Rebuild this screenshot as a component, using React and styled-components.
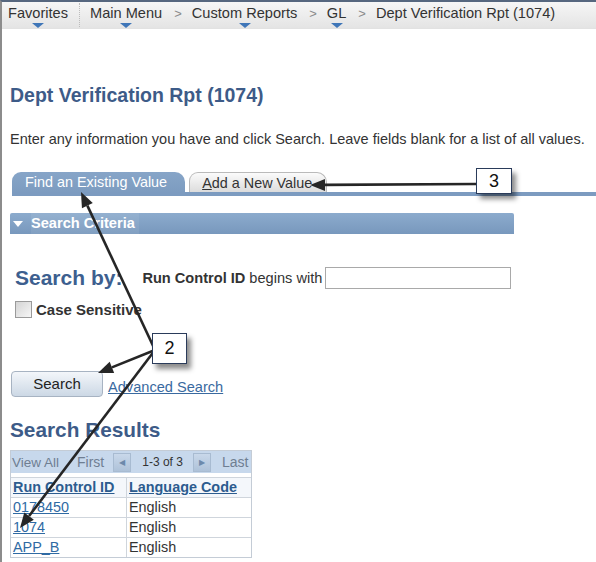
import React from 'react';
import styled, { createGlobalStyle } from 'styled-components';

const GlobalStyle = createGlobalStyle`
  html, body { margin: 0; padding: 0; background: #fff; }
  body { font-family: "Liberation Sans", Arial, sans-serif; color: #333; }
`;

const Page = styled.div`
  position: relative;
  width: 594px;
  height: 560px;
  border-left: 2px solid #8c8c8c;
  border-top: 2px solid #56677f;
  overflow: hidden;
`;

const NavBar = styled.div`
  display: flex;
  align-items: center;
  height: 26px;
  padding-left: 6px;
  background: linear-gradient(#f6f6f6, #e4e4e4);
  border-bottom: 1px solid #e2e2e2;
  font-size: 14.6px;
  color: #333;
`;

const NavItem = styled.span`
  position: relative;
  display: block;
  line-height: 17px;
  margin-top: -3px;

  ${p => p.menu && `
    &::after {
      content: '';
      position: absolute;
      left: 50%;
      top: 100%;
      margin: 1px 0 0 -6px;
      border-left: 6px solid transparent;
      border-right: 6px solid transparent;
      border-top: 5px solid #3f76b8;
    }
  `}
`;

const NavDivider = styled.span`
  width: 0;
  height: 24px;
  border-left: 1px dotted #bcbcbc;
  margin: 0 10px 0 11px;
`;

const Crumb = styled.span`
  color: #8a8a8a;
  font-size: 13px;
  margin: -3px 10px 0 12px;
`;

const Content = styled.div`
  padding-left: 8px;
`;

const Title = styled.h1`
  margin: 55px 0 0;
  font-size: 19.5px;
  line-height: 22px;
  font-weight: bold;
  color: #3d5b88;
`;

const Intro = styled.p`
  margin: 25px 0 0;
  font-size: 14.5px;
  line-height: 17px;
  color: #333;
`;

const TabStrip = styled.div`
  display: flex;
  align-items: flex-end;
  gap: 4px;
  margin: 24px 0 0 2px;
  border-bottom: 4px solid #7c9bc0;
`;

const Tab = styled.div`
  height: ${p => (p.active ? 20 : 19)}px;
  line-height: 20px;
  padding: ${p => (p.active ? '0 18px 0 13px' : '0 14px 0 12px')};
  font-size: 14.4px;
  border-radius: 9px 10px 0 0;
  color: ${p => (p.active ? '#fff' : '#333')};
  background: ${p => (p.active
    ? 'linear-gradient(#87a5c8, #7d9cc0)'
    : 'linear-gradient(#fbfbfb, #dcdcdc)')};
  border: ${p => (p.active ? 'none' : '1px solid #bababa')};
  border-bottom: none;
`;

const SectionBar = styled.div`
  display: flex;
  align-items: center;
  width: 504px;
  height: 21px;
  margin-top: 17px;
  background: linear-gradient(#8cabcd, #7898bd);
  border-radius: 2px 2px 0 0;
  color: #fff;
  font-size: 14.6px;
  font-weight: bold;

  &::before {
    content: '';
    margin: 0 8px 0 3px;
    border-left: 5px solid transparent;
    border-right: 5px solid transparent;
    border-top: 6px solid #fff;
  }
`;

const SectionLabel = styled.span`
  line-height: 21px;
  padding-right: 4px;
  background: rgba(255, 255, 255, 0.07);
`;

const SearchRow = styled.div`
  display: flex;
  align-items: center;
  height: 24px;
  margin-top: 32px;
  padding-left: 5px;
  font-size: 14.6px;
`;

const SearchBy = styled.span`
  font-size: 21px;
  font-weight: bold;
  color: #3d5f8f;
  margin-right: 20px;
`;

const Label = styled.span`
  font-weight: bold;
  color: #333;
  margin-right: 4px;
`;

const Input = styled.div`
  width: 184px;
  height: 20px;
  border: 1px solid #a9a9a9;
  margin-left: 3px;
  background: #fff;
`;

const CheckRow = styled.div`
  display: flex;
  align-items: center;
  height: 17px;
  margin-top: 11px;
  padding-left: 5px;
  font-size: 15px;
  font-weight: bold;
  color: #333;
`;

const Checkbox = styled.span`
  width: 15px;
  height: 15px;
  border: 1px solid #9a9a9a;
  background: linear-gradient(135deg, #d4d4d4, #f6f6f6);
  margin-right: 4px;
`;

const ActionRow = styled.div`
  display: flex;
  align-items: center;
  margin-top: 53px;
  padding-left: 1px;
`;

const Button = styled.div`
  width: 90px;
  height: 24px;
  line-height: 24px;
  text-align: center;
  border: 1px solid #a7b3c2;
  border-radius: 4px;
  background: linear-gradient(#f3f6fa, #ccd8e5);
  font-size: 15px;
  color: #222;
`;

const Link = styled.a`
  color: #3a6aa0;
  text-decoration: underline;
  font-size: 14.6px;
  margin: 6px 0 0 5px;
  cursor: pointer;
`;

const ResultsTitle = styled.h2`
  margin: 21px 0 0;
  font-size: 20.8px;
  line-height: 24px;
  font-weight: bold;
  color: #3d5b88;
`;

const Grid = styled.div`
  width: 240px;
  margin-top: 8px;
  overflow: hidden;
  border: 1px solid #c4ccd6;
  font-size: 14.4px;
`;

const Pager = styled.div`
  display: flex;
  align-items: center;
  height: 22px;
  white-space: nowrap;
  background: #c7d8ec;
  padding-left: 1px;
  border-bottom: 4px solid #fff;
`;

const PagerText = styled.span`
  margin-right: ${p => p.gap || 0}px;
  font-size: ${p => p.size || 14}px;
  color: ${p => (p.dark ? '#333' : '#6f7e92')};
`;

const PageBtn = styled.span`
  display: flex;
  align-items: center;
  justify-content: center;
  width: 16px;
  height: 17px;
  margin-right: ${p => p.gap || 0}px;
  background: linear-gradient(#c9d8ea, #aec2d9);
  border: 1px solid #a8bbd1;
  color: #6d89ab;
  font-size: 8px;
`;

const Row = styled.div`
  display: grid;
  grid-template-columns: 115px 1fr;
  height: 19px;
  line-height: 19px;
  border-top: 1px solid #cfd5dc;
  background: ${p => (p.head ? '#f4f7fb' : '#fff')};

  & > span {
    padding-left: 2px;
    white-space: nowrap;
  }
  & > span + span { border-left: 1px solid #cfd5dc; }
`;

const HeadLink = styled.span`
  font-weight: bold;
  color: #2c5c8f;
  text-decoration: underline;
`;

const CellLink = styled.span`
  color: #2f6aa3;
  text-decoration: underline;
`;

const Callout = styled.div`
  position: absolute;
  left: ${p => p.x}px;
  top: ${p => p.y}px;
  width: ${p => p.w}px;
  height: ${p => p.h}px;
  line-height: ${p => p.h}px;
  text-align: center;
  background: #fff;
  border: 1px solid #2a3b5a;
  box-shadow: 4px 5px 5px rgba(0, 0, 0, 0.45);
  font-size: 18px;
  color: #111;
`;

const Overlay = styled.svg`
  position: absolute;
  left: -2px;
  top: -2px;
  pointer-events: none;
`;

const arrows = [
  { from: [476, 184], to: [310, 185] },
  { from: [155, 350], to: [81, 192] },
  { from: [155, 350], to: [98, 373] },
  { from: [155, 350], to: [20, 528] },
];

function Arrow({ from, to }) {
  const [x1, y1] = from;
  const [x2, y2] = to;
  const a = Math.atan2(y2 - y1, x2 - x1);
  const len = 15;
  const w = 6;
  const bx = x2 - len * Math.cos(a);
  const by = y2 - len * Math.sin(a);
  const px = -Math.sin(a) * w;
  const py = Math.cos(a) * w;
  return (
    <g>
      <line x1={x1} y1={y1} x2={bx} y2={by} stroke="#262626" strokeWidth="2.6" />
      <polygon points={`${x2},${y2} ${bx + px},${by + py} ${bx - px},${by - py}`} fill="#262626" />
    </g>
  );
}

export default function App() {
  return (
    <Page>
      <GlobalStyle />
      <NavBar>
        <NavItem menu>Favorites</NavItem>
        <NavDivider />
        <NavItem menu>Main Menu</NavItem>
        <Crumb>&gt;</Crumb>
        <NavItem menu>Custom Reports</NavItem>
        <Crumb>&gt;</Crumb>
        <NavItem menu>GL</NavItem>
        <Crumb>&gt;</Crumb>
        <NavItem>Dept Verification Rpt (1074)</NavItem>
      </NavBar>

      <Content>
        <Title>Dept Verification Rpt (1074)</Title>
        <Intro>Enter any information you have and click Search. Leave fields blank for a list of all values.</Intro>

        <TabStrip>
          <Tab active>Find an Existing Value</Tab>
          <Tab><u>A</u>dd a New Value</Tab>
        </TabStrip>

        <SectionBar><SectionLabel>Search Criteria</SectionLabel></SectionBar>

        <SearchRow>
          <SearchBy>Search by:</SearchBy>
          <Label>Run Control ID</Label>
          <span>begins with</span>
          <Input />
        </SearchRow>

        <CheckRow>
          <Checkbox />
          Case Sensitive
        </CheckRow>

        <ActionRow>
          <Button>Search</Button>
          <Link>Advanced Search</Link>
        </ActionRow>

        <ResultsTitle>Search Results</ResultsTitle>

        <Grid>
          <Pager>
            <PagerText size={13.5} gap={18}>View All</PagerText>
            <PagerText gap={9}>First</PagerText>
            <PageBtn gap={11}>&#9664;</PageBtn>
            <PagerText dark size={12} gap={10}>1-3 of 3</PagerText>
            <PageBtn gap={11}>&#9654;</PageBtn>
            <PagerText>Last</PagerText>
          </Pager>
          <Row head>
            <span><HeadLink>Run Control ID</HeadLink></span>
            <span><HeadLink>Language Code</HeadLink></span>
          </Row>
          <Row>
            <span><CellLink>0178450</CellLink></span>
            <span>English</span>
          </Row>
          <Row>
            <span><CellLink>1074</CellLink></span>
            <span>English</span>
          </Row>
          <Row>
            <span><CellLink>APP_B</CellLink></span>
            <span>English</span>
          </Row>
        </Grid>
      </Content>

      <Overlay width="596" height="562">
        {arrows.map((a, i) => <Arrow key={i} {...a} />)}
      </Overlay>
      <Callout x={474} y={166} w={34} h={24}>3</Callout>
      <Callout x={150} y={331} w={33} h={29}>2</Callout>
    </Page>
  );
}
